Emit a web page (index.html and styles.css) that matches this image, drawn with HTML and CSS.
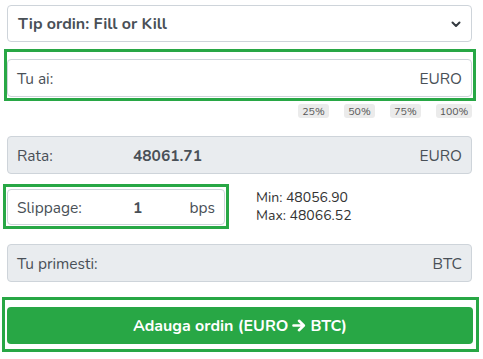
FILE: index.html
```html
<!DOCTYPE html>
<html lang="ro">

<head>
    <meta charset="UTF-8">
    <meta name="viewport" content="width=device-width, initial-scale=1.0">
    <title>Adauga ordin</title>

    <link rel="stylesheet" href="styles.css">
</head>

<body>
    <div class="order">
        <div class="select">
            <span>Tip ordin: Fill or Kill</span>
            <svg class="chevron" width="10" height="8" viewBox="0 0 10 8">
                <path d="M1.5 2.5 L5 6 L8.5 2.5" fill="none" stroke="#343a40" stroke-width="2" stroke-linecap="round" stroke-linejoin="round"/>
            </svg>
        </div>

        <div class="highlight hl-have">
            <div class="field">
                <span class="label">Tu ai:</span>
                <span class="unit">EURO</span>
            </div>
        </div>

        <div class="percents">
            <button>25%</button>
            <button>50%</button>
            <button>75%</button>
            <button class="wide">100%</button>
        </div>

        <div class="field readonly rate">
            <span class="label">Rata:</span>
            <span class="value">48061.71</span>
            <span class="unit">EURO</span>
        </div>

        <div class="slip-row">
            <div class="highlight hl-slip">
                <div class="field slip">
                    <span class="label">Slippage:</span>
                    <span class="value">1</span>
                    <span class="unit">bps</span>
                </div>
            </div>
            <div class="limits">
                <div>Min: 48056.90</div>
                <div>Max: 48066.52</div>
            </div>
        </div>

        <div class="field readonly receive">
            <span class="label">Tu primesti:</span>
            <span class="unit">BTC</span>
        </div>

        <div class="highlight hl-submit">
            <button class="submit">
                Adauga ordin (EURO
                <svg class="arrow" width="14" height="13" viewBox="0 0 14 13">
                    <path d="M1.5 6.5 H11.5 M7 1.8 L11.8 6.5 L7 11.2" fill="none" stroke="#fff" stroke-width="2.6" stroke-linecap="round" stroke-linejoin="round"/>
                </svg>
                BTC)
            </button>
        </div>
    </div>
</body>

</html>
```

FILE: styles.css
```css
* {
    box-sizing: border-box;
    margin: 0;
    padding: 0;
}

body {
    background-color: #fff;
    color: #495057;
    font-family: "Nunito", Lato, "Open Sans", sans-serif;
    font-size: 15.5px;
}

.order {
    padding-top: 5px;
}

.select {
    align-items: center;
    border: 1px solid #ced4da;
    border-radius: 4px;
    display: flex;
    font-size: 16px;
    font-weight: bold;
    height: 37px;
    justify-content: space-between;
    margin: 0 11px 0 7px;
    padding: 0 10px 0 10px;
}

.highlight {
    border: 3px solid #28a745;
}

.hl-have {
    margin: 7px 7px 0 4px;
    padding: 7px 1px 1px 0;
}

.field {
    align-items: center;
    background-color: #fff;
    border: 1px solid #ced4da;
    border-radius: 4px;
    display: flex;
    height: 38px;
    padding: 0 9px;
}

.field .label {
    width: 116px;
}

.field .value {
    font-weight: bold;
}

.field .unit {
    margin-left: auto;
}

.readonly {
    background-color: #e9ecef;
    margin: 0 11px 0 7px;
}

.percents {
    display: flex;
    gap: 15px;
    justify-content: flex-end;
    margin: 3px 11px 0 0;
}

.percents button {
    background-color: #ebebeb;
    border: none;
    border-radius: 3px;
    color: #555;
    font-family: inherit;
    font-size: 10.5px;
    height: 14px;
    width: 31px;
}

.percents .wide {
    width: 36px;
}

.rate {
    margin-top: 18px;
}

.slip-row {
    align-items: center;
    display: flex;
    margin-top: 10px;
}

.hl-slip {
    margin-left: 3px;
    padding: 2px 1px 1px 1px;
    width: 226px;
}

.slip {
    height: 36px;
}

.limits {
    color: #333;
    font-size: 14px;
    line-height: 18px;
    margin-left: 27px;
}

.receive {
    margin-top: 15px;
}

.hl-submit {
    margin: 15px 4px 0 2px;
    padding: 7px 3px 5px 2px;
}

.submit {
    align-items: center;
    background-color: #28a745;
    border: none;
    border-radius: 4px;
    color: #fff;
    display: flex;
    font-family: inherit;
    font-size: 16px;
    font-weight: bold;
    gap: 4px;
    height: 37px;
    justify-content: center;
    width: 100%;
}
```
